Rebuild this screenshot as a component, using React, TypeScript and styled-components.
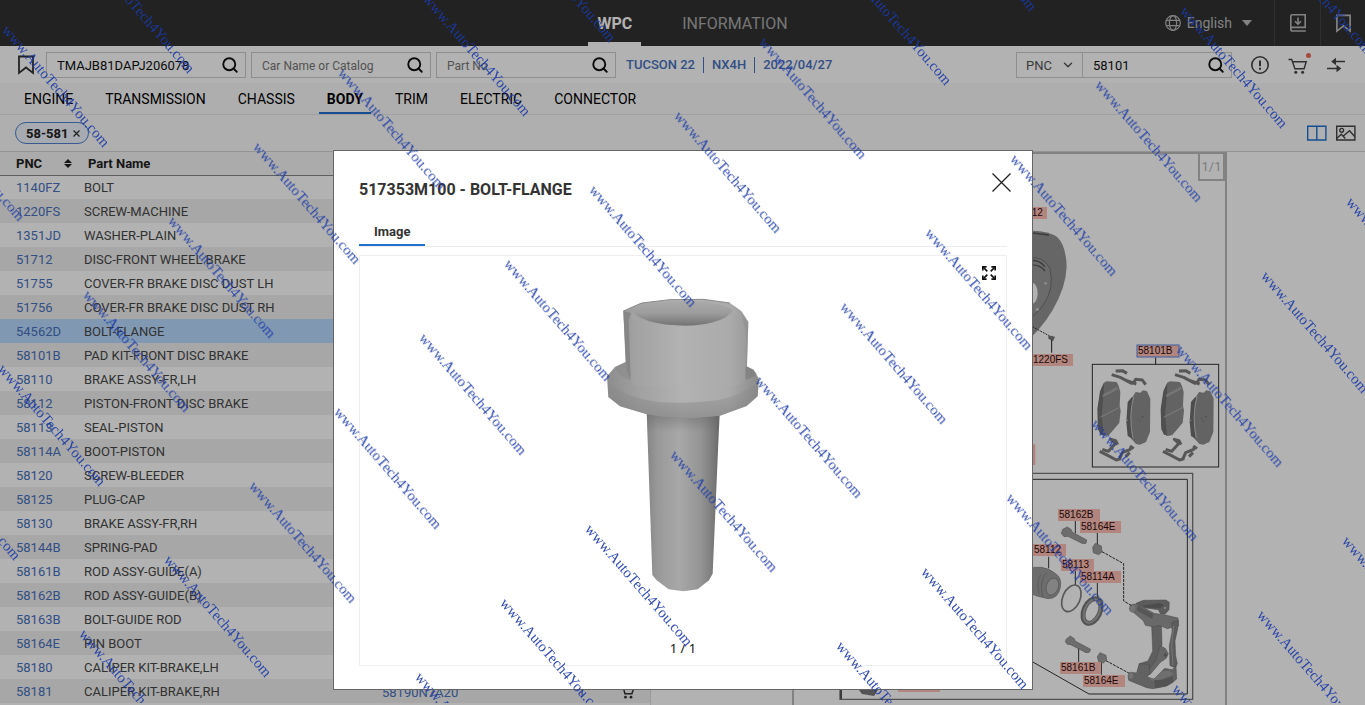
import React from "react";
import styled, { createGlobalStyle } from "styled-components";
import { Search, ChevronDown } from "lucide-react";

const GlobalStyle = createGlobalStyle`
  * { box-sizing: border-box; }
  body { margin: 0; font-family: Roboto, "Noto Sans", sans-serif; font-size: 13px; color: #222; background: #fff; }
  button, input, select { font: inherit; color: inherit; margin: 0; }
  button { background: none; border: 0; padding: 0; cursor: pointer; display: inline-flex; align-items: center; }
  a { color: inherit; text-decoration: none; }
  svg { display: block; flex: none; }
`;

const Page = styled.div`
  height: 100vh;
  display: flex;
  flex-direction: column;
  overflow: hidden;
  position: relative;
`;

/* ---------- top bar ---------- */
const TopBar = styled.header`
  height: 46px;
  flex: none;
  background: #323232;
  display: grid;
  grid-template-columns: 1fr auto 1fr;
`;
const MainNav = styled.nav`
  grid-column: 2;
  display: flex;
  gap: 32px;
  padding-left: 20px;
`;
const MainLink = styled.a<{ $active?: boolean }>`
  display: flex;
  align-items: center;
  padding: 4px 9px 0;
  font-size: 16px;
  font-weight: ${(p) => (p.$active ? 700 : 400)};
  color: ${(p) => (p.$active ? "#fff" : "#aaa")};
  border-bottom: 4px solid ${(p) => (p.$active ? "#fff" : "transparent")};
`;
const TopTools = styled.div`
  display: flex;
  justify-content: flex-end;
  color: #bbb;
`;
const Language = styled.button`
  gap: 6px;
  font-size: 14px;
  margin-right: 22px;
`;
const TopTool = styled.button`
  width: 46px;
  justify-content: center;
  border-left: 1px solid #444;
  &:last-child { width: 45px; }
`;

/* ---------- search bar ---------- */
const SearchBar = styled.div`
  height: 37px;
  flex: none;
  display: flex;
  align-items: center;
  padding: 0 20px 0 17px;
`;
const SavedButton = styled.button`
  width: 29px;
  color: #333;
`;
const Field = styled.label<{ $width: number }>`
  width: ${(p) => p.$width}px;
  height: 26px;
  margin-right: 5px;
  border: 1px solid #ccc;
  display: flex;
  align-items: center;
  padding: 1px 6px 0 10px;
  input {
    flex: 1;
    min-width: 0;
    border: 0;
    padding: 0;
    background: none;
    outline: 0;
    color: #111;
  }
  input::placeholder { color: #777; font-size: 12px; opacity: 1; }
`;
const PncSelect = styled.label`
  height: 26px;
  width: 66px;
  margin-left: auto;
  border: 1px solid #ccc;
  border-right: 0;
  display: flex;
  align-items: center;
  padding: 1px 7px 0 9px;
  color: #555;
  select {
    flex: 1;
    min-width: 0;
    appearance: none;
    border: 0;
    background: none;
    padding: 0;
    outline: 0;
  }
`;
const CarInfo = styled.ul`
  list-style: none;
  display: flex;
  margin: 0;
  padding: 1px 0 0 5px;
  color: #4a72bd;
  font-weight: 500;
  li { line-height: 16px; padding-right: 8px; }
  li + li { border-left: 1px solid #4a72bd; padding-left: 8px; }
`;
const Tools = styled.div`
  display: flex;
  align-items: center;
  gap: 18px;
  padding-left: 14px;
  color: #444;
`;

/* ---------- categories ---------- */
const Categories = styled.nav`
  height: 32px;
  flex: none;
  display: flex;
  gap: 16px;
  padding-left: 16px;
  background: #fafafa;
  border-bottom: 1px solid #e6e6e6;
`;
const Category = styled.a<{ $active?: boolean }>`
  padding: 8px 8px 0;
  font-size: 14px;
  line-height: 17px;
  color: #000;
  font-weight: ${(p) => (p.$active ? 700 : 400)};
  border-bottom: 2px solid ${(p) => (p.$active ? "#1f70d0" : "transparent")};
`;
const ChipRow = styled.div`
  height: 36px;
  flex: none;
  display: flex;
  align-items: center;
  gap: 9px;
  padding: 0 9px 0 15px;
  background: #fbfbfb;
`;
const Chip = styled.button`
  height: 22px;
  padding: 0 8px 0 10px;
  gap: 5px;
  border: 1px solid #4f82cf;
  border-radius: 11px;
  background: #f0f4fc;
  font-weight: 700;
  margin-right: auto;
`;

/* ---------- content ---------- */
const Content = styled.main`
  flex: 1;
  min-height: 0;
  display: flex;
  border-top: 1px solid #d4d4d4;
`;
const ListPanel = styled.section`
  width: 366px;
  overflow: hidden;
`;
const PartTable = styled.table`
  width: 100%;
  border-collapse: collapse;
  table-layout: fixed;
  th {
    height: 23px;
    padding: 0 0 0 16px;
    text-align: left;
    background: #f5f5f5;
    border-bottom: 1px solid #888;
  }
  th:first-child { width: 84px; }
  th + th { padding-left: 4px; }
  td { height: 24px; padding: 0; color: #484848; }
  td:first-child { padding-left: 16px; color: #4a72bd; }
  tr:nth-child(even) td { background: #efefef; }
  tr[aria-selected="true"] td { background: #b8daff; }
`;
const HeadCell = styled.span`
  display: flex;
  justify-content: space-between;
  align-items: center;
  padding-right: 12px;
`;
const NumberPanel = styled.section`
  width: 285px;
  display: flex;
  flex-direction: column;
  justify-content: flex-end;
  padding-bottom: 2px;
  border-right: 1px solid #ddd;
  table { width: 100%; border-collapse: collapse; }
  td { height: 22px; padding: 0; background: #efefef; color: #4a72bd; }
  td:first-child { padding-left: 16px; width: 212px; }
  td:last-child { color: #333; width: 29px; }
`;
const DrawingPanel = styled.section`
  flex: 1;
  display: flex;
  justify-content: center;
  padding-left: 3px;
`;
const DrawingFrame = styled.div`
  width: 435px;
  max-width: 100%;
  position: relative;
  overflow: hidden;
  border: 2px solid #bbb;
  border-bottom: 0;
`;
const Counter = styled.span`
  position: absolute;
  top: 0;
  right: 0;
  width: 27px;
  height: 27px;
  border: 2px solid #bbb;
  border-top: 0;
  color: #b4b4b4;
  font-size: 13px;
  line-height: 26px;
  text-align: center;
`;

/* ---------- dialog ---------- */
const Backdrop = styled.div`
  position: fixed;
  inset: 0;
  background: rgba(0, 0, 0, 0.3);
  display: flex;
  justify-content: center;
  align-items: flex-start;
  padding: 150px 0 0 1px;
`;
const Dialog = styled.section`
  width: 700px;
  max-width: 100%;
  border: 1px solid #666;
  background: #fff;
  padding: 22px 25px 23px;
`;
const DialogHead = styled.div`
  display: flex;
  justify-content: space-between;
  align-items: flex-start;
  h2 { margin: 7px 0 0; font-size: 16px; line-height: 20px; font-weight: 700; color: #333; }
  button { margin-right: -4px; }
`;
const Tabs = styled.div`
  display: flex;
  margin-top: 21px;
  border-bottom: 1px solid #ececec;
`;
const Tab = styled.button`
  height: 25px;
  padding: 0 15px 3px;
  font-weight: 700;
  color: #333;
  border-bottom: 2px solid #1f70d0;
`;
const ImageBox = styled.figure`
  height: 411px;
  margin: 8px 0 0;
  border: 1px solid #eee;
  display: flex;
  flex-direction: column;
  align-items: center;
  gap: 17px;
  padding: 10px 10px 8px;
  > button { align-self: flex-end; }
  figcaption {
    margin-top: auto;
    font-family: "Noto Sans", sans-serif;
    font-size: 13px;
    line-height: 18px;
    color: #111;
  }
`;

/* ---------- watermark ---------- */
const WatermarkLayer = styled.div`
  position: fixed;
  inset: 0 0 2px 0;
  overflow: hidden;
  pointer-events: none;
`;
const Mark = styled.span`
  position: absolute;
  font-family: "Liberation Serif", serif;
  font-size: 15px;
  line-height: 16px;
  color: #1c3aa8;
  opacity: 0.9;
  white-space: nowrap;
  transform-origin: 0 0;
  transform: rotate(49deg);
`;

const parts: [string, string][] = [
  ["1140FZ", "BOLT"],
  ["1220FS", "SCREW-MACHINE"],
  ["1351JD", "WASHER-PLAIN"],
  ["51712", "DISC-FRONT WHEEL BRAKE"],
  ["51755", "COVER-FR BRAKE DISC DUST LH"],
  ["51756", "COVER-FR BRAKE DISC DUST RH"],
  ["54562D", "BOLT-FLANGE"],
  ["58101B", "PAD KIT-FRONT DISC BRAKE"],
  ["58110", "BRAKE ASSY-FR,LH"],
  ["58112", "PISTON-FRONT DISC BRAKE"],
  ["58113", "SEAL-PISTON"],
  ["58114A", "BOOT-PISTON"],
  ["58120", "SCREW-BLEEDER"],
  ["58125", "PLUG-CAP"],
  ["58130", "BRAKE ASSY-FR,RH"],
  ["58144B", "SPRING-PAD"],
  ["58161B", "ROD ASSY-GUIDE(A)"],
  ["58162B", "ROD ASSY-GUIDE(B)"],
  ["58163B", "BOLT-GUIDE ROD"],
  ["58164E", "PIN BOOT"],
  ["58180", "CALIPER KIT-BRAKE,LH"],
  ["58181", "CALIPER KIT-BRAKE,RH"],
];

const categories = ["ENGINE", "TRANSMISSION", "CHASSIS", "BODY", "TRIM", "ELECTRIC", "CONNECTOR"];

const SearchIcon = () => <Search size={18} strokeWidth={2.5} color="#111" />;

const BookmarkIcon = ({ size = 18 }: { size?: number }) => (
  <svg width={size} height={size + 2} viewBox="0 0 18 20" fill="none" stroke="currentColor" strokeWidth="1.8">
    <path d="M2 1.5h14v16.500l-7-5.500-7 5.500z" />
  </svg>
);

const GlobeIcon = () => (
  <svg width="16" height="16" viewBox="0 0 16 16" fill="none" stroke="currentColor" strokeWidth="1.2">
    <circle cx="8" cy="8" r="7.3" />
    <ellipse cx="8" cy="8" rx="3.6" ry="7.3" />
    <path d="M1.4 5.4h13.2M1.4 10.6h13.2" />
  </svg>
);

const DownloadIcon = () => (
  <svg width="16" height="18" viewBox="0 0 16 18" fill="none" stroke="currentColor" strokeWidth="1.6">
    <path d="M15.8 17H2.6Q.8 17 .8 15.2V2.3Q.8.8 2.3.8h12.9v12.6H2.6Q.8 13.4.8 15.2" />
    <path d="M8 3.4v6.4M5 7.2l3 3 3-3" />
  </svg>
);

const AlertIcon = () => (
  <svg width="18" height="18" viewBox="0 0 18 18" fill="none" stroke="currentColor" strokeWidth="1.6">
    <circle cx="9" cy="9" r="8.2" />
    <path d="M9 4.4v5.8M9 11.8v2" strokeWidth="2" />
  </svg>
);

const CartIcon = () => (
  <svg width="22" height="24" viewBox="-1 0 22 24" fill="none" stroke="currentColor" strokeWidth="1.4" overflow="visible">
    <path d="M.5 6.500h3.200l3.200 9.200h9.200l2.100-7H4.600" />
    <circle cx="7.800" cy="19.300" r="1.500" fill="currentColor" stroke="none" />
    <circle cx="14.600" cy="19.300" r="1.500" fill="currentColor" stroke="none" />
    <circle cx="20.500" cy="2.500" r="2.500" fill="#f0685a" stroke="none" />
  </svg>
);

const SwapIcon = () => (
  <svg width="18" height="16" viewBox="0 0 18 16" fill="none" stroke="currentColor" strokeWidth="1.7">
    <path d="M18 4.500H7M0 11.500h11" />
    <path d="M9 .8v7.400L4.200 4.500zM9.500 7.800v7.400l4.800-3.700z" fill="currentColor" stroke="none" />
  </svg>
);

const SplitIcon = () => (
  <svg width="20" height="16" viewBox="0 0 20 16" fill="none" stroke="#1f70d0" strokeWidth="1.400">
    <path d="M.7 1.200h18.200v13.800H.7zM9.800 1.200v13.800" />
  </svg>
);

const PictureIcon = () => (
  <svg width="20" height="16" viewBox="0 0 20 16" fill="none" stroke="#444" strokeWidth="1.400">
    <path d="M.7 1.200h18.200v13.800H.7z" />
    <circle cx="5.700" cy="5.300" r="1.900" />
    <path d="M.7 13.500l4.600-4.200 4 4.200M7 11.300l6.500-5.600 5.400 6" />
  </svg>
);

const SmallCart = () => (
  <svg width="13" height="13" viewBox="0 0 13 13" fill="none" stroke="#333" strokeWidth="1.500">
    <path d="M0 1h2.200l1.700 6.800h7L12.500 3H3" />
    <circle cx="4.500" cy="11.200" r="1.400" fill="#333" stroke="none" />
    <circle cx="10" cy="11.200" r="1.400" fill="#333" stroke="none" />
  </svg>
);

const BoltPicture = () => (
  <svg width="156" height="296" viewBox="135 80 468 888" role="img" aria-label="Bolt flange">
    <defs>
      <linearGradient id="shank">
        <stop offset="0" stopColor="#858585" />
        <stop offset=".15" stopColor="#999" />
        <stop offset=".45" stopColor="#a8a8a8" />
        <stop offset=".75" stopColor="#939393" />
        <stop offset=".93" stopColor="#777" />
        <stop offset="1" stopColor="#666" />
      </linearGradient>
      <linearGradient id="head" gradientUnits="userSpaceOnUse" x1="190" x2="565" y1="0" y2="0">
        <stop offset="0" stopColor="#989898" />
        <stop offset=".1" stopColor="#a2a2a2" />
        <stop offset=".45" stopColor="#b2b2b2" />
        <stop offset=".85" stopColor="#ababab" />
        <stop offset="1" stopColor="#9a9a9a" />
      </linearGradient>
      <linearGradient id="flange" gradientUnits="userSpaceOnUse" x1="141" x2="597" y1="0" y2="0">
        <stop offset="0" stopColor="#8d8d8d" />
        <stop offset=".2" stopColor="#a0a0a0" />
        <stop offset=".5" stopColor="#b2b2b2" />
        <stop offset=".8" stopColor="#aaa" />
        <stop offset="1" stopColor="#8a8a8a" />
      </linearGradient>
      <linearGradient id="bore" x2="0" y2="1">
        <stop offset="0" stopColor="#aaa" />
        <stop offset=".5" stopColor="#9c9c9c" />
        <stop offset="1" stopColor="#737373" />
      </linearGradient>
      <linearGradient id="shade" x2="0" y2="1">
        <stop offset="0" stopColor="#666" stopOpacity=".55" />
        <stop offset="1" stopColor="#666" stopOpacity="0" />
      </linearGradient>
      <linearGradient id="rim" x2="0" y2="1">
        <stop offset="0" stopColor="#777" stopOpacity="0" />
        <stop offset="1" stopColor="#777" stopOpacity=".5" />
      </linearGradient>
    </defs>
    <path d="M260 425L277 914 290 930 326 957 370 963 413 957 447 930 458 910 479 425z" fill="url(#shank)" />
    <path d="M260 425h219l-2 60H263z" fill="url(#shade)" />
    <path d="M141 318L165 290 197 275 555 285 580 298 597 325 593 378 560 407 480 436 400 442 300 438 255 430 180 408 145 380z" fill="url(#flange)" />
    <path d="M141 330Q200 385 300 396 400 400 480 388 570 365 597 325L593 378 560 407 480 436 400 442 300 438 255 430 180 408 145 380z" fill="url(#rim)" />
    <path d="M190 122L245 98 330 88 430 87 510 98 543 121 565 155 561 285 556 328 540 345H225L211 330 197 285z" fill="url(#head)" />
    <path d="M190 122l23 6-7 20 6 182-13-35z" fill="#868686" />
    <path d="M543 121l22 34-4 130-5 43 2-140z" fill="#8c8c8c" opacity=".45" />
    <path d="M165 290l32-15 14 55q-35-10-46-40z" fill="#888" opacity=".5" />
    <path d="M556 328l1-40 24 10 10 14q-12 12-35 16z" fill="#777" opacity=".55" />
    <path d="M216 120C228 104 310 91 385 92S512 110 518 122C500 148 445 166 375 166S235 152 216 120z" fill="url(#bore)" />
    <path d="M216 120L222 134Q236 144 262 150L215 148z" fill="#a4a4a4" />
    <path d="M190 122L245 98 330 88 430 87 510 98" fill="none" stroke="#8a8a8a" strokeWidth="3" />
  </svg>
);

const Label = ({ x, y, w, text, selected }: { x: number; y: number; w: number; text: string; selected?: boolean }) => (
  <g>
    <rect x={x - 1} y={y - 9} width={w} height="12" fill="#ffc0b6" stroke={selected ? "#5a86e0" : "none"} />
    <text x={x} y={y} fontFamily="Liberation Sans, sans-serif" fontSize="10" fill="#300c0c">
      {text}
    </text>
  </g>
);

const BrakePads = () => (
  <g>
    <g fill="none" stroke="#7d7d7d" strokeWidth="9" strokeLinejoin="round">
      <path d="M92 33l20-1 14 8M80 44l26 8 34 18 8-4M126 62l28 10" />
      <path d="M146 68l6-10 20 2 10 14" />
      <path d="M44 274l24 12 26 14 14-4M52 268l18 6" />
      <path d="M68 276l24-26-14-12 14 4 6 12M104 296l8-18 24-10 2-8 8 6M122 290l12-12" />
    </g>
    <path d="M57 68l8-4 30 2 6 12 5 18-2 40 3 16-4 36-18 22-14 16-15 2-10-10-8-22 2-60 8-48z" fill="#8e8e8e" />
    <path d="M57 68l-12 26-8 54 2 60 8 16 9 2-6-60 6-66z" fill="#717171" />
    <path d="M53 110l46-24M53 106l44-24M46 172l58-30" stroke="#bdbdbd" strokeWidth="2.500" fill="none" />
    <path d="M152 96l14 2 8-7 12 3 10 22-1 100-12 30-18 8-12-2-18-20-8-40 2-60z" fill="#8e8e8e" />
    <path d="M140 112l-12 14-4 60 4 42 14 8q-10-60 2-124z" fill="#6f6f6f" />
    <path d="M146 110q-16 60-2 124" stroke="#c6c6c6" strokeWidth="3" fill="none" />
    <path d="M122 181h7" stroke="#ddd" strokeWidth="2" />
    <path d="M158 176l3 1M170 172l6-3M164 184h3" stroke="#555" strokeWidth="2" />
  </g>
);

const CarrierBracket = () => (
  <g>
    <path d="M78 55l22-9 68-1 10 7-1 22-12 14-14-2-6-12-60-8z" fill="#858585" stroke="#666" strokeWidth="1.500" />
    <path d="M96 62l50-8 16 4-10 12-40-2z" fill="#6e6e6e" />
    <circle cx="165" cy="69" r="5" fill="#b8b8b8" stroke="#555" />
    <path d="M124 100h30l2 80-22 68-44 26-8-10 6-28 26-8 14-30z" fill="#888" stroke="#6a6a6a" strokeWidth="1.500" />
    <path d="M150 182l16 8 9 16-6 14-18 12-30 36-18 4 34-46z" fill="#929292" stroke="#6a6a6a" strokeWidth="1.500" />
    <circle cx="166" cy="210" r="5" fill="#707070" />
    <path d="M58 72l8-14 16-1 50 28 38 6 34 8 2 24-12 2-22 6-24-10-20 4-22-4-6-14z" fill="#979797" stroke="#6a6a6a" strokeWidth="1.500" />
    <path d="M84 62l46 26-4 14-46-26z" fill="#7b7b7b" />
    <ellipse cx="68" cy="70" rx="10" ry="12" fill="#a8a8a8" stroke="#6e6e6e" />
    <path d="M186 112l19-6-2 26-8 36 2 44 5 24-6 12-16-6-2-60 8-40z" fill="#858585" stroke="#666" strokeWidth="1.500" />
    <path d="M191 122l-6 60 4 58" fill="none" stroke="#aaa" strokeWidth="3" />
    <path d="M54 272l8-10 18 2 8-28 30 2 2 26-8 12 20 6 24-24 8-8 22 4 12-12 2 40-14 12-18 10-40 7-18-3-54-22z" fill="#8d8d8d" stroke="#666" strokeWidth="1.500" />
    <path d="M112 276l20 6 24-24 22 0 14 10-36 14-26 6z" fill="#a0a0a0" />
    <path d="M132 284l4 26 36-8 18-12-2-16-34 12z" fill="#777" />
    <ellipse cx="63" cy="272" rx="8" ry="11" fill="#a8a8a8" stroke="#6e6e6e" />
  </g>
);

const PartsDrawing = () => (
  <svg width="432" height="551" viewBox="794 154 432 551" role="img" aria-label="Front brake parts drawing">
    <g transform="translate(1010 150) scale(.33333)">
      <path d="M20 245l47-3q50 0 75 20 26 25 28 88-2 60-42 130-35 60-95 110z" fill="#939393" />
      <path d="M40 252l27-3 50 6" stroke="#555" strokeWidth="4" fill="none" />
      <path d="M50 325q50-10 70 30 14 60-20 110-20 30-55 45z" fill="#9a9a9a" stroke="#6e6e6e" strokeWidth="3" />
      <path d="M55 332q30-6 50 18M60 345q30-2 45 18" stroke="#555" strokeWidth="4" fill="none" />
      <ellipse cx="66" cy="430" rx="17" ry="32" fill="#fff" />
      <circle cx="107" cy="400" r="4" fill="#ccc" />
      <circle cx="82" cy="478" r="5" fill="#ccc" />
      <path d="M67 530l50 27" stroke="#333" strokeWidth="3" strokeDasharray="6 3" />
      <path d="M115 556l20 4-6 14-14-8z" fill="#777" />
      <path d="M125 570v38M437 622v22" stroke="#222" strokeWidth="3" />
      <rect x="247" y="643" width="379" height="308" fill="none" stroke="#333" strokeWidth="3" />
      <rect x="60" y="883" width="16" height="62" fill="#ffb9b4" />
    </g>
    <g transform="translate(1085 360) scale(.33333)">
      <BrakePads />
      <g transform="translate(190 0)">
        <BrakePads />
      </g>
    </g>
    <g transform="translate(1110 585) scale(.33333)">
      <CarrierBracket />
    </g>
    <g transform="translate(1020 460) scale(.33333)">
      <path d="M-540 40H518V718H-540z" fill="none" stroke="#777" strokeWidth="4" />
      <path d="M0 58H502V702H207L-60 550" fill="none" stroke="#333" strokeWidth="3" />
      <path d="M166 180v40M232 216v40M86 290v35M166 330v45M232 366v46M176 560v46M244 600v44" stroke="#333" strokeWidth="3" />
      <path d="M246 275l65 36v112l24 14M258 602l70 38" fill="none" stroke="#333" strokeWidth="3" strokeDasharray="9 3" />
      <g stroke="#777" strokeWidth="2" fill="#9c9c9c">
        <path d="M128 208l14-7 12 8 2 7 44 24-2 10-10 1-44-22-12 1-8-10z" />
        <path d="M139 537l12-9 12 8 2 7 47 25-4 9-10 1-46-24-10-1-6-8z" />
        <path d="M218 262l8-12 18 8 2 18-10 8-16-6z" />
        <path d="M232 590l8-12 18 8 2 14-10 9-14-4z" />
        <path d="M-10 350Q20 318 64 322q22 2 44 20 18 12 13 40-6 34-37 34Q50 410 20 396z" />
        <path d="M62 345q-14 20-4 56M80 338q-24 24-12 72" fill="none" />
        <ellipse cx="97" cy="380" rx="18" ry="26" fill="#bbb" transform="rotate(20 97 380)" />
      </g>
      <ellipse cx="154" cy="415" rx="26" ry="42" fill="none" stroke="#808080" strokeWidth="5" transform="rotate(24 154 415)" />
      <ellipse cx="216" cy="453" rx="24" ry="39" fill="none" stroke="#777" strokeWidth="15" transform="rotate(24 216 453)" />
      <ellipse cx="216" cy="453" rx="22" ry="37" fill="none" stroke="#a4a4a4" strokeWidth="6" transform="rotate(24 216 453)" />
    </g>
    <Label x={1015} y={216} w={33} text="51712" />
    <Label x={1033} y={363} w={41} text="1220FS" />
    <Label x={1138} y={354} w={42} text="58101B" selected />
    <Label x={1059} y={518} w={42} text="58162B" />
    <Label x={1081} y={530} w={41} text="58164E" />
    <Label x={1034} y={553} w={33} text="58112" />
    <Label x={1062} y={568} w={33} text="58113" />
    <Label x={1081} y={580} w={41} text="58114A" />
    <Label x={1061} y={671} w={41} text="58161B" />
    <Label x={1084} y={684} w={42} text="58164E" />
    <path d="M841 620v79" fill="none" stroke="#555" strokeWidth="2" />
    <path d="M856 686l22 4-4 6-12-2z" fill="#777" />
    <rect x="898" y="680" width="42" height="12" fill="#ffc0b6" />
  </svg>
);

const marks: { x: number; y: number }[] = [];
for (let col = -3; col <= 6; col++) {
  for (let row = -6; row <= 12; row++) {
    const x = 11 + col * 336 - row * 85;
    const y = 22 + col * 43 + row * 74;
    if (x > -105 && x < 1920 && y > -115 && y < 1080) marks.push({ x, y });
  }
}

export default function App() {
  return (
    <>
      <GlobalStyle />
      <Page>
        <TopBar>
          <MainNav>
            <MainLink href="#wpc" $active>WPC</MainLink>
            <MainLink href="#information">INFORMATION</MainLink>
          </MainNav>
          <TopTools>
            <Language>
              <GlobeIcon />
              English
              <svg width="14" height="6" viewBox="0 0 14 6" fill="currentColor">
                <path d="M4 0h10L9 6z" />
              </svg>
            </Language>
            <TopTool aria-label="Download"><DownloadIcon /></TopTool>
            <TopTool aria-label="Bookmarks"><BookmarkIcon size={17} /></TopTool>
          </TopTools>
        </TopBar>

        <SearchBar>
          <SavedButton aria-label="Saved"><BookmarkIcon /></SavedButton>
          <Field $width={200}>
            <input aria-label="VIN" defaultValue="TMAJB81DAPJ206078" />
            <SearchIcon />
          </Field>
          <Field $width={180}>
            <input aria-label="Car name or catalog" placeholder="Car Name or Catalog" />
            <SearchIcon />
          </Field>
          <Field $width={180}>
            <input aria-label="Part number" placeholder="Part No" />
            <SearchIcon />
          </Field>
          <CarInfo>
            <li>TUCSON 22</li>
            <li>NX4H</li>
            <li>2022/04/27</li>
          </CarInfo>
          <PncSelect>
            <select aria-label="Search type" defaultValue="PNC">
              <option>PNC</option>
            </select>
            <ChevronDown size={14} strokeWidth={2.5} />
          </PncSelect>
          <Field $width={150}>
            <input aria-label="Search value" defaultValue="58101" />
            <SearchIcon />
          </Field>
          <Tools>
            <button aria-label="Notice"><AlertIcon /></button>
            <button aria-label="Cart"><CartIcon /></button>
            <button aria-label="Compare"><SwapIcon /></button>
          </Tools>
        </SearchBar>

        <Categories>
          {categories.map((name) => (
            <Category key={name} href={"#" + name.toLowerCase()} $active={name === "BODY"}>
              {name}
            </Category>
          ))}
        </Categories>

        <ChipRow>
          <Chip>
            58-581
            <svg width="7" height="7" viewBox="0 0 7 7" stroke="#333" strokeWidth="1.300">
              <path d="M.5.500l6 6M6.500.500l-6 6" />
            </svg>
          </Chip>
          <button aria-label="Split view"><SplitIcon /></button>
          <button aria-label="Image view"><PictureIcon /></button>
        </ChipRow>

        <Content>
          <ListPanel>
            <PartTable>
              <thead>
                <tr>
                  <th>
                    <HeadCell>
                      PNC
                      <svg width="8" height="9" viewBox="0 0 8 9" fill="#222">
                        <path d="M4 0l4 4H0zM4 9l4-4H0z" />
                      </svg>
                    </HeadCell>
                  </th>
                  <th>Part Name</th>
                </tr>
              </thead>
              <tbody>
                {parts.map(([pnc, name]) => (
                  <tr key={pnc} aria-selected={pnc === "54562D"}>
                    <td><a href={"#" + pnc}>{pnc}</a></td>
                    <td>{name}</td>
                  </tr>
                ))}
              </tbody>
            </PartTable>
          </ListPanel>
          <NumberPanel>
            <table>
              <tbody>
                <tr>
                  <td><a href="#58190N7A20">58190N7A20</a></td>
                  <td>1</td>
                  <td><SmallCart /></td>
                </tr>
              </tbody>
            </table>
          </NumberPanel>
          <DrawingPanel>
            <DrawingFrame>
              <PartsDrawing />
              <Counter>1/1</Counter>
            </DrawingFrame>
          </DrawingPanel>
        </Content>
      </Page>

      <Backdrop>
        <Dialog role="dialog" aria-labelledby="part-title">
          <DialogHead>
            <h2 id="part-title">517353M100 - BOLT-FLANGE</h2>
            <button aria-label="Close">
              <svg width="19" height="19" viewBox="0 0 19 19" stroke="#222" strokeWidth="1.300">
                <path d="M.5.500l18 18M18.500.500l-18 18" />
              </svg>
            </button>
          </DialogHead>
          <Tabs role="tablist">
            <Tab role="tab" aria-selected="true">Image</Tab>
          </Tabs>
          <ImageBox>
            <button aria-label="Full screen">
              <svg width="14" height="14" viewBox="0 0 14 14" fill="none" stroke="#111" strokeWidth="1.700">
                <path d="M.8 4.600V.8h3.800M9.400.8h3.800v3.800M13.200 9.400v3.800H9.400M4.600 13.200H.8V9.400" />
                <path d="M1 1l4.300 4.300M13 1L8.700 5.300M13 13L8.700 8.700M1 13l4.300-4.300" />
              </svg>
            </button>
            <BoltPicture />
            <figcaption>1 / 1</figcaption>
          </ImageBox>
        </Dialog>
      </Backdrop>

      <WatermarkLayer aria-hidden="true">
        {marks.map(({ x, y }) => (
          <Mark key={x + "," + y} style={{ left: x, top: y }}>www.AutoTech4You.com</Mark>
        ))}
      </WatermarkLayer>
    </>
  );
}
